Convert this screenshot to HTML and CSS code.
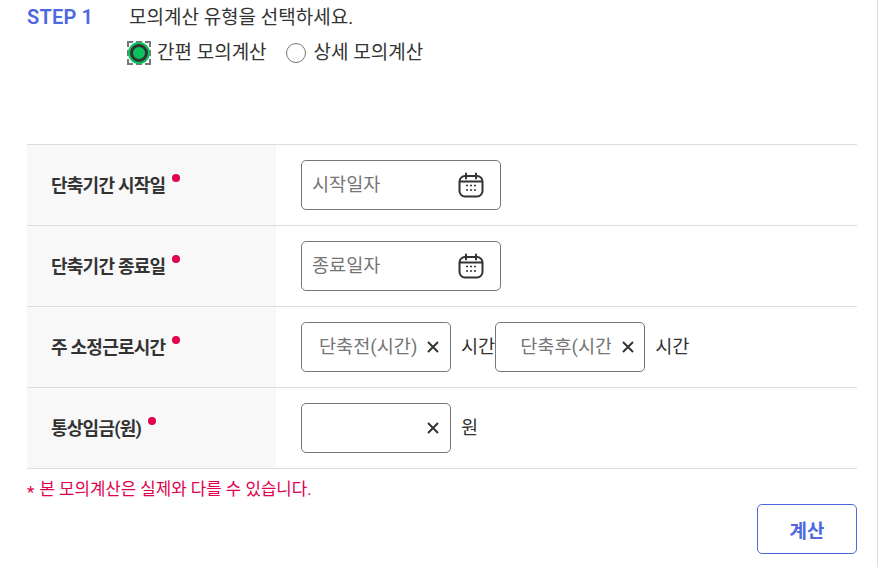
FILE: index.html
```html
<!DOCTYPE html>
<html lang="ko">
<head>
    <meta charset="UTF-8">
    <meta name="viewport" content="width=device-width, initial-scale=1.0">
    <title>단축근무 모의계산</title>
    <link rel="stylesheet" href="styles.css">
</head>
<body>
    <svg class="icon-defs" width="0" height="0">
        <symbol id="calendar" viewBox="0 0 26 26">
            <rect x="1.5" y="4" width="23" height="20.5" rx="5.5" fill="none" stroke="currentColor" stroke-width="2"/>
            <path d="M2 9.5H24M8 1.5V6.5M18 1.5V6.5" fill="none" stroke="currentColor" stroke-width="2" stroke-linecap="round"/>
            <path d="M8 13.5h2M12 13.5h2M16 13.5h2M8 18h2M12 18h2M16 18h2" fill="none" stroke="currentColor" stroke-width="1.6"/>
        </symbol>
        <symbol id="clear" viewBox="0 0 12 12">
            <path d="M1 1L11 11M11 1L1 11" fill="none" stroke="currentColor" stroke-width="2"/>
        </symbol>
    </svg>

    <div class="container">
        <div class="step">
            <strong class="step-name">STEP 1</strong>
            <div class="step-body">
                <p class="step-title">모의계산 유형을 선택하세요.</p>
                <div class="radio-group">
                    <label class="radio-item">
                        <span class="radio-focus"><input type="radio" name="calcType" checked></span>
                        간편 모의계산
                    </label>
                    <label class="radio-item">
                        <span class="radio-plain"><input type="radio" name="calcType"></span>
                        상세 모의계산
                    </label>
                </div>
            </div>
        </div>

        <div class="form-table">
            <div class="form-row">
                <div class="form-label"><span>단축기간 시작일</span><i class="required"></i></div>
                <div class="form-field">
                    <div class="input-box date-box">
                        <input type="text" placeholder="시작일자">
                        <svg class="calendar-icon"><use href="#calendar"/></svg>
                    </div>
                </div>
            </div>
            <div class="form-row">
                <div class="form-label"><span>단축기간 종료일</span><i class="required"></i></div>
                <div class="form-field">
                    <div class="input-box date-box">
                        <input type="text" placeholder="종료일자">
                        <svg class="calendar-icon"><use href="#calendar"/></svg>
                    </div>
                </div>
            </div>
            <div class="form-row">
                <div class="form-label"><span>주 소정근로시간</span><i class="required"></i></div>
                <div class="form-field">
                    <div class="input-box num-box">
                        <input type="text" placeholder="단축전(시간)">
                        <svg class="clear-icon"><use href="#clear"/></svg>
                    </div>
                    <span class="unit">시간</span>
                    <div class="input-box num-box num-box-after">
                        <input type="text" placeholder="단축후(시간)">
                        <svg class="clear-icon"><use href="#clear"/></svg>
                    </div>
                    <span class="unit">시간</span>
                </div>
            </div>
            <div class="form-row">
                <div class="form-label"><span>통상임금(원)</span><i class="required"></i></div>
                <div class="form-field">
                    <div class="input-box num-box">
                        <input type="text">
                        <svg class="clear-icon"><use href="#clear"/></svg>
                    </div>
                    <span class="unit">원</span>
                </div>
            </div>
        </div>

        <p class="notice"><span class="notice-mark">*</span> 본 모의계산은 실제와 다를 수 있습니다.</p>
        <div class="actions">
            <button type="button" class="calc-button">계산</button>
        </div>
    </div>
</body>
</html>
```

FILE: styles.css
```css
html, body {
    height: 100%;
}

body {
    margin: 0;
    background-color: #fff;
    color: #333;
    font-family: 'Roboto', 'Noto Sans CJK KR', sans-serif;
    font-size: 19px;
    overflow: hidden;
}

.icon-defs {
    display: block;
    height: 0;
}

.container {
    box-sizing: border-box;
    width: 878px;
    height: 567px;
    padding: 0 20px 0 27px;
    border-right: 1px solid #ddd;
}

.step {
    display: flex;
    height: 144px;
}

.step-name {
    width: 102px;
    padding-top: 4px;
    color: #4d68e1;
    font-size: 20px;
    font-weight: 600;
    line-height: 27px;
    letter-spacing: 0.2px;
}

.step-title {
    margin: 4px 0 0;
    line-height: 27px;
}

.radio-group {
    display: flex;
    gap: 17px;
    margin-top: 8px;
    margin-left: -2px;
}

.radio-item {
    display: flex;
    align-items: center;
    gap: 6px;
    line-height: 27px;
}

.radio-focus, .radio-plain {
    display: flex;
    align-items: center;
    justify-content: center;
    box-sizing: border-box;
    width: 24px;
    height: 24px;
}

.radio-focus {
    border: 2px dashed #777;
}

input[type="radio"] {
    appearance: none;
    flex: none;
    box-sizing: border-box;
    width: 20px;
    height: 20px;
    margin: 0;
    border: 1px solid #767676;
    border-radius: 50%;
    background-color: #fff;
}

input[type="radio"]:checked {
    width: 18px;
    height: 18px;
    border: 3px solid #333;
    background-color: #0cc25f;
    box-shadow: 0 0 0 2px #0cc25f;
}

.form-table {
    border-top: 1px solid #ddd;
}

.form-row {
    display: flex;
    height: 81px;
    box-sizing: border-box;
    border-bottom: 1px solid #ddd;
}

.form-label {
    display: flex;
    align-items: center;
    gap: 7px;
    box-sizing: border-box;
    width: 249px;
    padding-left: 24px;
    padding-bottom: 2px;
    background-color: #f8f8f8;
    font-size: 18px;
    font-weight: 700;
    letter-spacing: -0.75px;
}

.required {
    width: 8px;
    height: 8px;
    margin-bottom: 13px;
    border-radius: 50%;
    background-color: #e0004d;
}

.form-field {
    display: flex;
    align-items: center;
    padding-left: 25px;
}

.input-box {
    display: flex;
    align-items: center;
    box-sizing: border-box;
    height: 50px;
    border: 1px solid #767676;
    border-radius: 5px;
    background-color: #fff;
}

.input-box input {
    flex: 1;
    min-width: 0;
    border: none;
    outline: none;
    padding: 0 0 1px;
    background: transparent;
    color: #333;
    font-family: inherit;
    font-size: 18.6px;
}

.input-box input::placeholder {
    color: #757575;
    opacity: 1;
}

.date-box {
    width: 200px;
    padding: 0 16px 0 10px;
}

.num-box {
    width: 150px;
    padding: 0 11px 0 17px;
}

.num-box-after {
    padding-left: 24px;
    padding-right: 10px;
}

.num-box-after .clear-icon {
    margin-left: 11px;
}

.calendar-icon {
    width: 26px;
    height: 26px;
    color: #333;
}

.clear-icon {
    flex: none;
    width: 12px;
    height: 12px;
    margin-left: 9px;
    color: #333;
}

.unit {
    margin-left: 10px;
    font-size: 18.6px;
    line-height: 27px;
}

.notice {
    margin: 8px 0 0;
    color: #e0004d;
    font-size: 16.8px;
    line-height: 24px;
}

.notice-mark {
    margin-right: 1px;
    vertical-align: -3px;
    line-height: 1;
}

.actions {
    display: flex;
    justify-content: flex-end;
    margin-top: 3px;
}

.calc-button {
    width: 100px;
    height: 50px;
    border: 1px solid #4d68e1;
    border-radius: 5px;
    background-color: #fff;
    color: #4d68e1;
    font-family: inherit;
    font-size: 19px;
    font-weight: 700;
}
```
